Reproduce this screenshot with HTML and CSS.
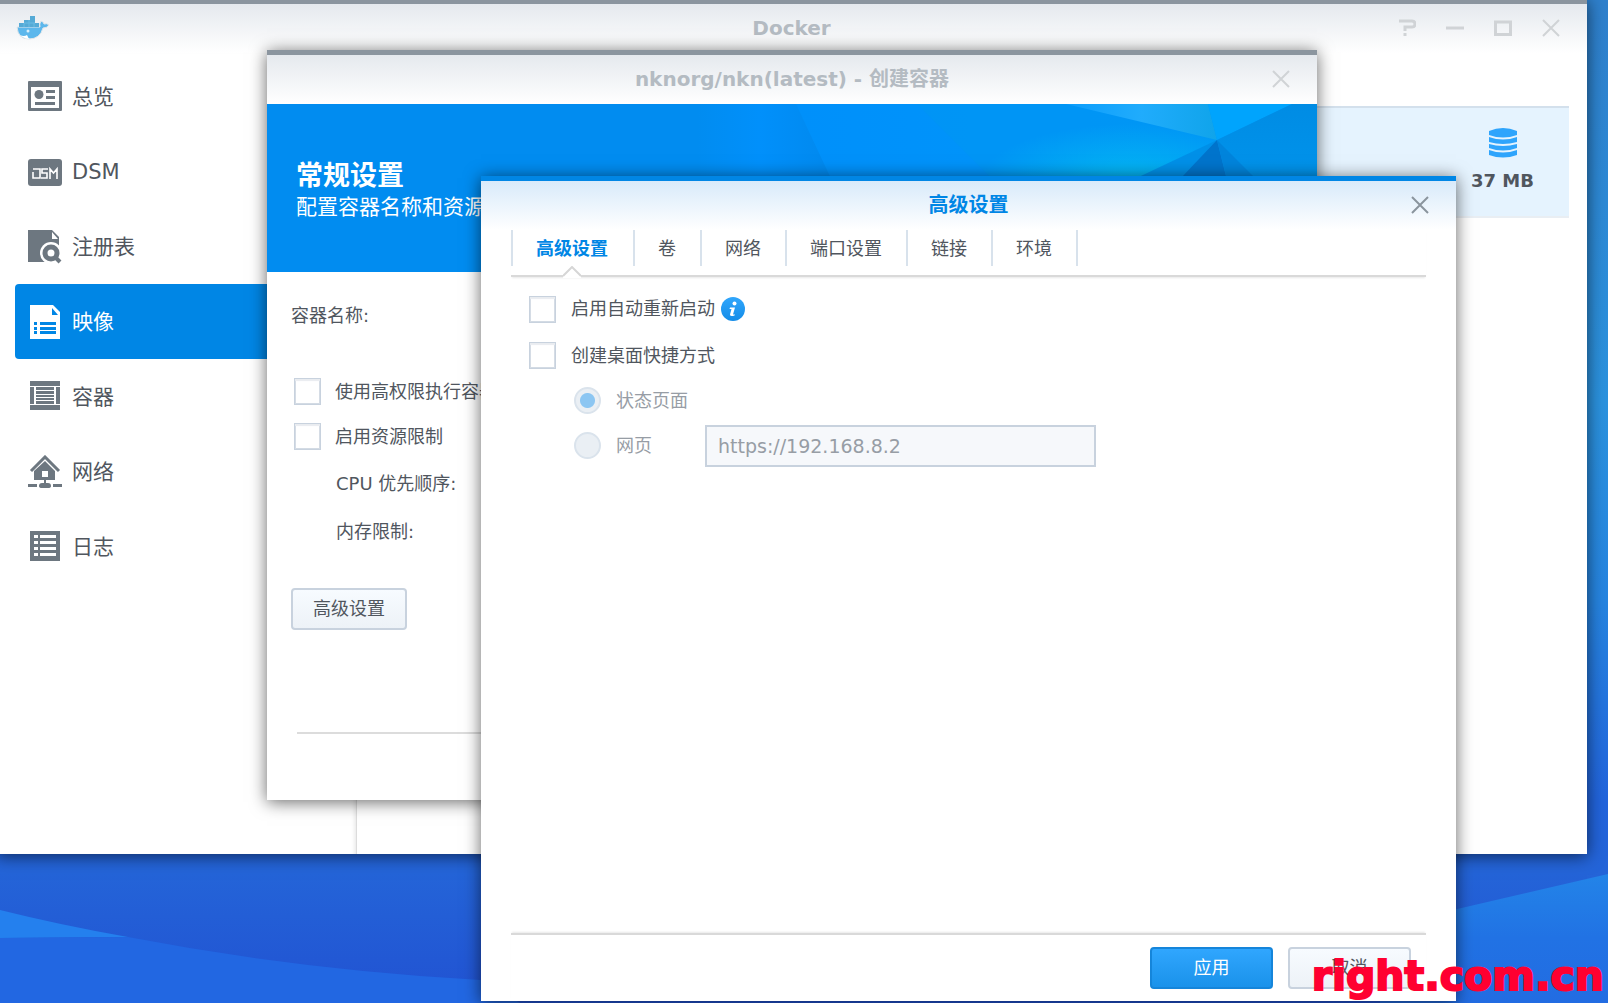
FILE: index.html
```
<!DOCTYPE html>
<html lang="zh-CN">
<head>
<meta charset="utf-8">
<title>Docker</title>
<link rel="stylesheet" href="styles.css">
</head>
<body>
<svg class="wallpaper" viewBox="0 0 1608 1003" preserveAspectRatio="none" aria-hidden="true">
  <defs>
    <linearGradient id="sky" x1="0" y1="0" x2="0" y2="1"><stop offset="0" stop-color="#2f80cc"/><stop offset=".4" stop-color="#2b92de"/><stop offset=".6" stop-color="#2684e0"/><stop offset=".8" stop-color="#2264dc"/><stop offset=".87" stop-color="#2464d8"/><stop offset="1" stop-color="#2152d2"/></linearGradient>
    <linearGradient id="hill" x1="0" y1="0" x2="0" y2="1"><stop offset="0" stop-color="#2384e8"/><stop offset=".5" stop-color="#2172e4"/><stop offset="1" stop-color="#226ce2"/></linearGradient>
  </defs>
  <rect width="1608" height="1003" fill="url(#sky)"/>
  <path d="M0 910Q60 925 128 937L0 938Z" fill="#2480ee"/>
  <path d="M0 938L128 937Q300 970 481 980L520 1003H0Z" fill="#2267e2"/>
  <path d="M1380 927L1608 874V1003H1380Z" fill="url(#hill)"/>
</svg>

<section class="window app">
  <header class="titlebar">
    <svg class="whale" viewBox="0 0 34 26"><path d="M1 12H24Q23 9 25 6Q28 7 28 9Q31 8 33 10Q31 13 27 13Q24 24 13 24Q2 24 1 12Z" fill="#5cb7ec" stroke="#dfe6ea"/><path d="M3 12V8H8V5H14V1H19V8H23V12Z" fill="#55aad6"/><path d="M8 8V12M13 5V12M18 8V12M8 8H19" stroke="#6bbbe4" stroke-width="1"/><path d="M4 20Q8 22 11 20Q12 23 14 24Q8 24 4 20Z" fill="#fff"/><circle cx="12" cy="16" r="1.500" fill="#d8eefa"/></svg>
    <h1>Docker</h1>
    <div class="controls">
      <button aria-label="帮助"><svg viewBox="0 0 18 18"><path d="M1 2H14Q17 2 17 5Q17 8 14 8H7V12M7 14V17" stroke-width="3"/></svg></button>
      <button aria-label="最小化"><svg viewBox="0 0 18 18"><path d="M0 9H18" stroke-width="3"/></svg></button>
      <button aria-label="最大化"><svg viewBox="0 0 18 18"><path d="M1.500 2V15.500H16.500V2M0 3H18" stroke-width="3"/></svg></button>
      <button aria-label="关闭"><svg viewBox="0 0 18 18"><path d="M1 1L17 17M17 1L1 17"/></svg></button>
    </div>
  </header>
  <div class="app-body">
    <nav class="sidebar">
      <a href="#overview"><svg viewBox="0 0 34 34"><path fill-rule="evenodd" d="M1 1H33Q34 1 34 2V30Q34 31 33 31H1Q0 31 0 30V2Q0 1 1 1ZM3 7V28H31V7Z"/><circle cx="11" cy="14.500" r="4.500"/><path d="M18 10H27V13H18ZM18 16H27V19H18ZM7 22H27V25H7Z"/></svg>总览</a>
      <a href="#dsm"><svg viewBox="0 0 34 34"><rect y="4" width="34" height="27" rx="3"/><path d="M5 14H12V23H5V17M20 14H14V18H19V23H13M22 24V14L25.500 18L29 14V24" fill="none" stroke="#fff" stroke-width="1.600"/></svg>DSM</a>
      <a href="#registry"><svg viewBox="0 0 34 34"><path d="M0 0H24L31 7V32H0Z"/><path d="M24 2L30 9H24Z" fill="#fff"/><circle cx="23" cy="23" r="11" fill="#fff"/><circle cx="23" cy="23" r="6" fill="none" stroke="#6d7780" stroke-width="5"/><path d="M27 27L32 32" stroke="#6d7780" stroke-width="4"/></svg>注册表</a>
      <a href="#image" class="active"><svg viewBox="0 0 34 34"><path d="M2 0H25L32 7V34H2Z"/><path d="M24 3L30 10H24ZM6 17H9V20H6ZM12 17H28V20H12ZM6 22H9V25H6ZM12 22H28V25H12ZM6 26H9V29H6ZM12 26H28V29H12Z" fill="#0086e5"/></svg>映像</a>
      <a href="#container"><svg viewBox="0 0 34 34"><path d="M2 1H32V6H2ZM2 7H6V24H2ZM28 7H32V24H28ZM8 7H26V10H8ZM8 11H26V14H8ZM8 15H26V17H8ZM8 18H26V20H8ZM8 21H26V24H8ZM2 25H32V30H2Z"/></svg>容器</a>
      <a href="#network"><svg viewBox="0 0 34 34"><path d="M3 16L17 2L31 16" fill="none" stroke="#6d7780" stroke-width="3"/><path fill-rule="evenodd" d="M17 6L27 16V25H18V28H20Q23 28 23 31Q23 33 20 33H14Q11 33 11 31Q11 28 14 28H16V25H6V16ZM14 16V22H20V16Z"/><path d="M0 29H9V32H0ZM25 29H34V32H25Z"/></svg>网络</a>
      <a href="#log"><svg viewBox="0 0 34 34"><path d="M2 1H32V31H2Z"/><path d="M6 5H10V8H6ZM12 5H28V8H12ZM6 11H10V14H6ZM12 11H28V14H12ZM6 17H10V20H6ZM12 17H28V20H12ZM6 23H10V26H6ZM12 23H28V26H12Z" fill="#fff"/></svg>日志</a>
    </nav>
    <main class="images">
      <div class="image-row">
        <div class="size"><svg viewBox="0 0 28 30"><path d="M0 3Q14 -3 28 3V7Q14 12 0 7ZM0 9Q14 14 28 9V14Q14 18 0 14ZM0 16Q14 20 28 16V20Q14 25 0 20ZM0 22Q14 27 28 22V27Q14 32 0 27Z"/></svg><b>37 MB</b></div>
      </div>
    </main>
  </div>
</section>

<section class="window wizard">
  <header class="titlebar">
    <h2>nknorg/nkn(latest) - 创建容器</h2>
    <div class="controls"><button aria-label="关闭"><svg viewBox="0 0 18 18"><path d="M1 1L17 17M17 1L1 17"/></svg></button></div>
  </header>
  <div class="banner">
    <svg class="facets" viewBox="-3 0 620 168" preserveAspectRatio="none" aria-hidden="true">
      <defs>
        <linearGradient id="f0"><stop offset="0" stop-color="#018cf0"/><stop offset=".35" stop-color="#0190fb"/><stop offset=".75" stop-color="#0189ee"/><stop offset="1" stop-color="#0184e6"/></linearGradient>
        <linearGradient id="f2"><stop offset="0" stop-color="#0090fa"/><stop offset="1" stop-color="#0099fa"/></linearGradient>
        <radialGradient id="glow" gradientUnits="userSpaceOnUse" cx="0" cy="0" r="1" gradientTransform="translate(430 76) scale(150 56)"><stop offset="0" stop-color="#04b8f4"/><stop offset="1" stop-color="#04b8f4" stop-opacity="0"/></radialGradient>
        <linearGradient id="f1"><stop offset="0" stop-color="#0c9dfc"/><stop offset=".5" stop-color="#20acfc"/><stop offset="1" stop-color="#10a4ea"/></linearGradient>
        <linearGradient id="f3" x1="0" y1="0" x2="0" y2="1"><stop offset="0" stop-color="#008ce4"/><stop offset="1" stop-color="#009cf4"/></linearGradient>
      </defs>
      <path d="M-3 0H96L175 168H-3Z" fill="url(#f0)"/>
      <path d="M96 0H620V168H175Z" fill="url(#f2)"/>
      <path d="M217 0H620V168H385Z" fill="#0096f2" opacity=".7"/>
      <path d="M217 0H620V168H385Z" fill="url(#glow)"/>
      <path d="M366 0H508L517 36Z" fill="url(#f1)"/>
      <path d="M508 0H592L517 36Z" fill="#00a4fd"/>
      <path d="M592 0H620V168H630L517 36Z" fill="url(#f3)"/>
      <path d="M517 36L238 168H630Z" fill="#0090e8"/>
      <path d="M517 36L392 168H550Z" fill="#0074cc"/>
      <path d="M517 36L550 168H649Z" fill="#0084dc"/>
    </svg>
    <h3>常规设置</h3>
    <p>配置容器名称和资源限制</p>
  </div>
  <div class="wizard-body">
    <p class="line name">容器名称:</p>
    <label class="line"><input type="checkbox">使用高权限执行容器</label>
    <label class="line"><input type="checkbox">启用资源限制</label>
    <p class="line sub">CPU 优先顺序:</p>
    <p class="line sub">内存限制:</p>
    <button class="btn">高级设置</button>
  </div>
  <footer class="wizard-foot"></footer>
</section>

<section class="window advanced">
  <header class="titlebar">
    <h2>高级设置</h2>
    <div class="controls"><button aria-label="关闭"><svg viewBox="0 0 18 18"><path d="M1 1L17 17M17 1L1 17"/></svg></button></div>
  </header>
  <nav class="tabs">
    <a href="#advanced" class="current">高级设置<svg class="notch" viewBox="0 0 18 12" aria-hidden="true"><path d="M0 10L9 1L18 10V12H0Z" fill="#fff"/><path d="M0 10L9 1L18 10" fill="none" stroke="#d6d6d6" stroke-width="2"/></svg></a>
    <a href="#volume">卷</a>
    <a href="#net">网络</a>
    <a href="#port">端口设置</a>
    <a href="#link">链接</a>
    <a href="#env">环境</a>
  </nav>
  <form class="options">
    <div class="option first"><label><input type="checkbox">启用自动重新启动</label><svg class="info" viewBox="0 0 24 24" role="img" aria-label="信息"><defs><linearGradient id="ib" x1="0" y1="0" x2="0" y2="1"><stop offset="0" stop-color="#30a6fc"/><stop offset="1" stop-color="#148ce8"/></linearGradient></defs><circle cx="12" cy="12" r="12" fill="url(#ib)"/><circle cx="13.500" cy="6.500" r="2" fill="#fff"/><path d="M9 10.500H14L12 17.500H14L13.500 18.500Q9 20 9 17.500L10.500 12H8.500Z" fill="#fff"/></svg></div>
    <div class="option"><label><input type="checkbox">创建桌面快捷方式</label></div>
    <div class="option nested"><label><input type="radio" name="target" checked disabled>状态页面</label></div>
    <div class="option nested"><label><input type="radio" name="target" disabled>网页</label><input class="url" type="text" value="https://192.168.8.2" aria-label="网页地址" disabled></div>
  </form>
  <footer class="actions">
    <button class="btn primary">应用</button>
    <button class="btn">取消</button>
  </footer>
</section>
<div class="watermark">right.com.cn</div>
</body>
</html>
```
FILE: styles.css
```
* { box-sizing: border-box; }

body {
  margin: 0;
  height: 100vh;
  overflow: hidden;
  position: relative;
  background: #2464d8;
  color: #50565e;
  font: 18px/24px "DejaVu Sans", "Noto Sans CJK SC", sans-serif;
}

h1, h2, h3, p { margin: 0; }
a { color: inherit; text-decoration: none; }
button, input { font: inherit; color: inherit; }

.wallpaper { position: absolute; width: 100%; height: 100%; }

/* windows */
.window {
  position: absolute;
  display: flex;
  flex-direction: column;
  background: #fff;
  border-top: 5px solid #8b959f;
  box-shadow: 0 2px 16px rgba(0, 0, 0, .6);
}
.app { top: -1px; left: -4px; right: 21px; bottom: 149px; }
.wizard { top: 50px; left: 267px; right: 291px; bottom: 203px; }
.advanced { top: 176px; left: 481px; right: 152px; bottom: 2px; border-top-color: #0086e5; }

.titlebar {
  flex: none;
  display: grid;
  grid-template-columns: 1fr auto 1fr;
  align-items: center;
  height: 49px;
  padding: 0 27px 2px;
  background: linear-gradient(#e5e9ee, #fff);
}
.app .titlebar { padding-left: 20px; padding-right: 27px; }
.app .titlebar h1 { padding-left: 7px; }
.advanced .titlebar { background: linear-gradient(#d8eafa, #fff); }
.titlebar h1, .titlebar h2 {
  grid-column: 2;
  color: #b4bbc2;
  font-size: 20px;
  line-height: 28px;
  font-weight: bold;
}
.advanced h2 { color: #0086e5; }
.whale { width: 34px; height: 26px; }
.controls { grid-column: 3; display: flex; justify-content: flex-end; gap: 30px; }
.controls button { display: flex; padding: 0; border: 0; background: none; }
.controls svg { width: 18px; height: 18px; fill: none; stroke: #d0d3d6; stroke-width: 2; }
.advanced .controls svg { stroke: #8a949d; }

/* main window */
.app-body { flex: 1; display: flex; min-height: 0; }
.sidebar {
  flex: none;
  width: 361px;
  padding: 6px 0 0 19px;
  border-right: 1px solid #dcdcdc;
  box-shadow: inset -4px 0 4px -3px #e4e4e4;
}
.sidebar a {
  display: flex;
  align-items: center;
  gap: 10px;
  height: 75px;
  padding-left: 13px;
  border-radius: 4px 0 0 4px;
  font-size: 21px;
}
.sidebar svg { width: 34px; height: 34px; fill: #6d7780; }
.sidebar .active { background: #0086e5; color: #fff; }
.sidebar .active svg { fill: #fff; }
.images { flex: 1; padding: 53px 18px 0 20px; }
.image-row {
  display: flex;
  justify-content: flex-end;
  height: 112px;
  padding: 20px 35px;
  background: #e5f3fe;
  border-top: 2px solid #d3e0ec;
  border-bottom: 2px solid #e9eef3;
}
.size { display: flex; flex-direction: column; align-items: center; gap: 11px; }
.size svg { width: 28px; height: 30px; fill: #2ea4fc; }

/* container wizard */
.banner {
  flex: none;
  position: relative;
  height: 168px;
  padding: 54px 29px 0;
  background: #018cf0;
  color: #fff;
}
.facets { position: absolute; top: 0; right: 0; width: 620px; height: 168px; }
.banner h3 { font-size: 27px; line-height: 36px; }
.banner p { font-size: 21px; line-height: 26px; }
.wizard-body { flex: 1; padding: 20px 24px; }
.line { display: flex; align-items: center; gap: 14px; height: 45px; padding-left: 3px; }
.line.name { height: 48px; padding: 0; margin-bottom: 29px; }
.line.sub { height: 48px; padding: 2px 0 0 45px; }
.wizard-body .btn { margin-top: 33px; padding: 0 20px; }
.wizard-foot {
  flex: none;
  height: 68px;
  margin: 0 30px;
  border-top: 2px solid #dcdcdc;
}

/* form controls */
input[type="checkbox"], input[type="radio"] {
  appearance: none;
  flex: none;
  width: 27px;
  height: 27px;
  margin: 0;
  background: #fff;
  border: 1px solid #c8d2de;
  box-shadow: inset 0 2px 1px #e9ecf0, inset 0 0 0 1px #d3dbe4;
}
input[type="radio"] {
  border: 2px solid #dae3ec;
  border-radius: 50%;
  background: #eaeff4;
  box-shadow: none;
}
input[type="radio"]:checked { background: radial-gradient(circle, #8cc6f2 7px, #eaeff4 8px); }
.btn {
  height: 42px;
  padding: 0;
  border: 2px solid #c8d2de;
  border-radius: 4px;
  background: linear-gradient(#f7fbff, #edf2f7);
}
.btn.primary { border-color: #1585da; background: linear-gradient(#30a6fe, #1a92ea); color: #fff; }

/* advanced settings */
.tabs {
  flex: none;
  display: flex;
  height: 47px;
  margin: 0 30px;
  border-bottom: 2px solid #d9d9d9;
  box-shadow: 0 2px 2px -1px #e8e8e8;
}
.tabs a {
  position: relative;
  height: 36px;
  padding: 0 24px 0 23px;
  border-left: 2px solid #d8e2ec;
  line-height: 38px;
}
.tabs a:last-child { border-right: 2px solid #d8e2ec; }
.tabs .current { padding-right: 25px; color: #0086e5; font-weight: bold; }
.notch { position: absolute; left: 50%; top: 36px; width: 18px; height: 12px; margin-left: -10px; }
.options { flex: 1; padding: 8px 48px; }
.option { display: flex; align-items: center; height: 45px; }
.option.first { height: 48px; }
.option label { display: flex; align-items: center; gap: 15px; }
.option.nested { padding-left: 45px; color: #979da5; }
.info { width: 24px; height: 24px; margin-left: 6px; }
.url {
  width: 391px;
  height: 42px;
  margin-left: 53px;
  padding: 0 11px;
  border: 2px solid #c8d2de;
  background: #f6f8fb;
  color: #979da5;
  font-size: 19px;
}
.actions {
  flex: none;
  display: flex;
  justify-content: flex-end;
  gap: 15px;
  height: 68px;
  margin: 0 30px;
  padding: 12px 15px;
  border-top: 2px solid #d9d9d9;
  box-shadow: 0 -2px 2px -1px #e8e8e8;
}
.actions .btn { width: 123px; }

.watermark {
  position: absolute;
  right: 4px;
  bottom: 3px;
  color: #ff0030;
  font: bold 41px/48px "DejaVu Sans", sans-serif;
  -webkit-text-stroke: 2px #ff0030;
}
```
